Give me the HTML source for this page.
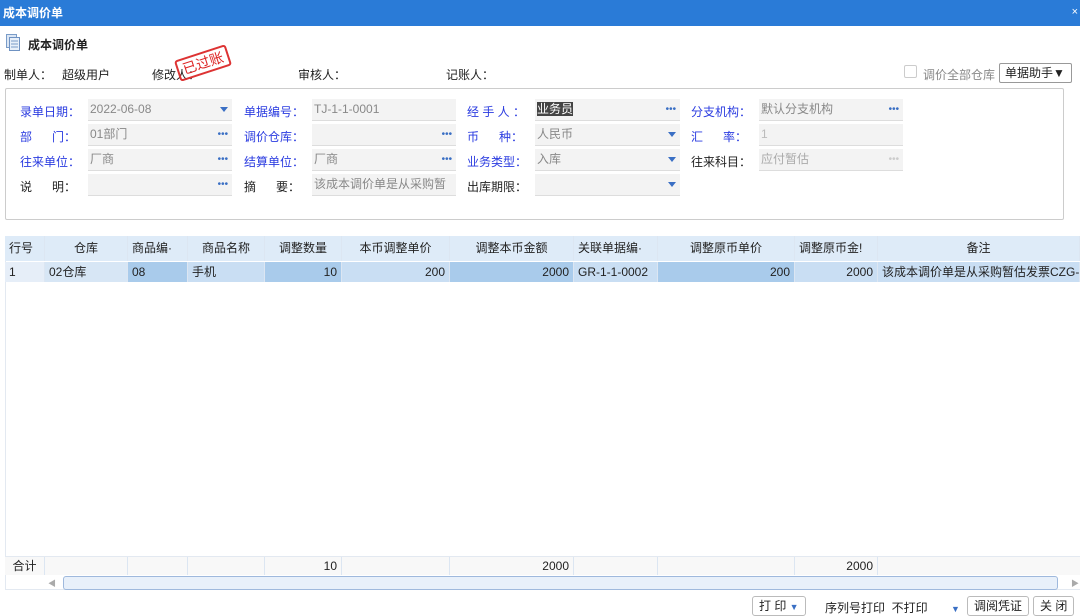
<!DOCTYPE html><html><head><meta charset="utf-8"><style>
*{margin:0;padding:0;box-sizing:border-box}
body{width:1080px;height:613px;overflow:hidden;background:#fff;font-family:"Liberation Sans","Noto Sans CJK SC",sans-serif;font-size:12px;color:#222;position:relative}
.a{position:absolute;white-space:nowrap}
.t{top:0;left:0;width:1080px;height:26px;background:#2a7bd7;color:#fff;font-weight:bold;font-size:12px;line-height:26px;padding-left:3px}
.lb{color:#2a3be0}
.in{position:absolute;height:22px;background:#f3f3f3;border-bottom:1px solid #ddd;color:#888;line-height:21px;padding-left:2px}
.d{position:absolute;right:4px;top:0;color:#3a6fc4;font-size:10px}
.ar{position:absolute;right:4px;top:8px;width:0;height:0;border-left:4px solid transparent;border-right:4px solid transparent;border-top:5px solid #3a6fc4}
.c{position:absolute;height:100%;border-right:1px solid #dce6f2;line-height:inherit;padding:0 4px;overflow:hidden;white-space:nowrap}
.r{text-align:right}
.btn{position:absolute;top:596px;height:20px;border:1px solid #bbb;border-radius:3px;background:#fff;line-height:18px;padding:0 6px}
</style></head><body>
<div class="a t">成本调价单</div>
<div class="a" style="right:2px;top:6px;color:#fff;font-size:11px">×</div>
<svg class="a" style="left:6px;top:34px" width="14" height="18"><rect x="0.5" y="0.5" width="10" height="13" fill="#dbe6f4" stroke="#7a9cc8"/><rect x="3.5" y="3.5" width="10" height="13" fill="#e8f0fa" stroke="#6f92c2"/><path d="M5 7h7M5 10h7M5 13h7" stroke="#7a9cc8"/></svg>
<div class="a" style="left:28px;top:36px;font-weight:bold">成本调价单</div>
<div class="a" style="left:4px;top:66px">制单人：</div>
<div class="a" style="left:62px;top:66px">超级用户</div>
<div class="a" style="left:152px;top:66px">修改人：</div>
<div class="a" style="left:176px;top:52px;border:2px solid #d33;color:#d22;transform:rotate(-18deg);padding:0 4px;font-size:14px;border-radius:3px;line-height:18px">已过账</div>
<div class="a" style="left:298px;top:66px">审核人：</div>
<div class="a" style="left:446px;top:66px">记账人：</div>
<div class="a" style="left:904px;top:65px;width:13px;height:13px;border:1px solid #ccc;border-radius:2px"></div>
<div class="a" style="left:923px;top:66px;color:#888">调价全部仓库</div>
<div class="a" style="left:999px;top:63px;width:73px;height:20px;border:1px solid #999;border-radius:2px;line-height:18px;padding-left:5px">单据助手▼</div>
<div class="a" style="left:5px;top:88px;width:1059px;height:132px;border:1px solid #ccc;border-radius:2px"></div>
<!-- row1 -->
<div class="a lb" style="left:20px;top:103px">录单日期：</div><div class="in" style="left:88px;top:99px;width:144px">2022-06-08<i class="ar"></i></div>
<div class="a lb" style="left:244px;top:103px">单据编号：</div><div class="in" style="left:312px;top:99px;width:144px">TJ-1-1-0001</div>
<div class="a lb" style="left:467px;top:103px">经 手 人 ：</div><div class="in" style="left:535px;top:99px;width:145px"><span style="background:#444;color:#fff">业务员</span><i class="d">•••</i></div>
<div class="a lb" style="left:691px;top:103px">分支机构：</div><div class="in" style="left:759px;top:99px;width:144px">默认分支机构<i class="d">•••</i></div>
<!-- row2 -->
<div class="a lb" style="left:20px;top:128px">部&nbsp;&nbsp;&nbsp;&nbsp;&nbsp;&nbsp;门：</div><div class="in" style="left:88px;top:124px;width:144px">01部门<i class="d">•••</i></div>
<div class="a lb" style="left:244px;top:128px">调价仓库：</div><div class="in" style="left:312px;top:124px;width:144px"><i class="d">•••</i></div>
<div class="a lb" style="left:467px;top:128px">币&nbsp;&nbsp;&nbsp;&nbsp;&nbsp;&nbsp;种：</div><div class="in" style="left:535px;top:124px;width:145px">人民币<i class="ar"></i></div>
<div class="a lb" style="left:691px;top:128px">汇&nbsp;&nbsp;&nbsp;&nbsp;&nbsp;&nbsp;率：</div><div class="in" style="left:759px;top:124px;width:144px;color:#bbb">1</div>
<!-- row3 -->
<div class="a lb" style="left:20px;top:153px">往来单位：</div><div class="in" style="left:88px;top:149px;width:144px">厂商<i class="d">•••</i></div>
<div class="a lb" style="left:244px;top:153px">结算单位：</div><div class="in" style="left:312px;top:149px;width:144px">厂商<i class="d">•••</i></div>
<div class="a lb" style="left:467px;top:153px">业务类型：</div><div class="in" style="left:535px;top:149px;width:145px">入库<i class="ar"></i></div>
<div class="a" style="left:691px;top:153px">往来科目：</div><div class="in" style="left:759px;top:149px;width:144px;color:#aaa">应付暂估<i class="d" style="color:#ccc">•••</i></div>
<!-- row4 -->
<div class="a" style="left:20px;top:178px">说&nbsp;&nbsp;&nbsp;&nbsp;&nbsp;&nbsp;明：</div><div class="in" style="left:88px;top:174px;width:144px"><i class="d">•••</i></div>
<div class="a" style="left:244px;top:178px">摘&nbsp;&nbsp;&nbsp;&nbsp;&nbsp;&nbsp;要：</div><div class="in" style="left:312px;top:174px;width:144px;overflow:hidden">该成本调价单是从采购暂</div>
<div class="a" style="left:467px;top:178px">出库期限：</div><div class="in" style="left:535px;top:174px;width:145px"><i class="ar"></i></div>
<!-- grid -->
<div class="a" style="left:5px;top:236px;width:1075px;height:354px;border:1px solid #e3e9f1;border-right:none"></div>
<div class="a" style="left:5px;top:236px;width:1075px;height:25px;background:#deebf8;line-height:25px">
<div class="c" style="left:0;width:40px">行号</div><div class="c" style="left:40px;width:83px;text-align:center">仓库</div><div class="c" style="left:123px;width:60px">商品编·</div><div class="c" style="left:183px;width:77px;text-align:center">商品名称</div><div class="c" style="left:260px;width:77px;text-align:center">调整数量</div><div class="c" style="left:337px;width:108px;text-align:center">本币调整单价</div><div class="c" style="left:445px;width:124px;text-align:center">调整本币金额</div><div class="c" style="left:569px;width:84px">关联单据编·</div><div class="c" style="left:653px;width:137px;text-align:center">调整原币单价</div><div class="c" style="left:790px;width:83px">调整原币金!</div><div class="c" style="left:873px;width:202px;text-align:center">备注</div></div>
<div class="a" style="left:5px;top:262px;width:1075px;height:20px;background:#c9def3;line-height:20px">
<div class="c" style="left:0;width:40px;background:#e6eef8">1</div><div class="c" style="left:40px;width:83px;background:#d7e6f5">02仓库</div><div class="c" style="left:123px;width:60px;background:#a9cbeb">08</div><div class="c" style="left:183px;width:77px">手机</div><div class="c r" style="left:260px;width:77px;background:#a9cbeb">10</div><div class="c r" style="left:337px;width:108px">200</div><div class="c r" style="left:445px;width:124px;background:#a9cbeb">2000</div><div class="c" style="left:569px;width:84px">GR-1-1-0002</div><div class="c r" style="left:653px;width:137px;background:#a9cbeb">200</div><div class="c r" style="left:790px;width:83px">2000</div><div class="c" style="left:873px;width:202px">该成本调价单是从采购暂估发票CZG-1</div></div>
<div class="a" style="left:5px;top:556px;width:1075px;height:19px;background:#f8f8f8;border-top:1px solid #e3e9f1;line-height:18px">
<div class="c" style="left:0;width:40px;text-align:center">合计</div><div class="c" style="left:40px;width:83px"></div><div class="c" style="left:123px;width:60px"></div><div class="c" style="left:183px;width:77px"></div><div class="c r" style="left:260px;width:77px">10</div><div class="c" style="left:337px;width:108px"></div><div class="c r" style="left:445px;width:124px">2000</div><div class="c" style="left:569px;width:84px"></div><div class="c" style="left:653px;width:137px"></div><div class="c r" style="left:790px;width:83px">2000</div></div>
<div class="a" style="left:63px;top:576px;width:995px;height:14px;background:#e8f0fa;border:1px solid #9fb9dd;border-radius:3px"></div>
<div class="a" style="left:48px;top:578px;color:#aaa;font-size:8px">◀</div><div class="a" style="left:1071px;top:578px;color:#aaa;font-size:8px">▶</div>
<div class="btn" style="left:752px">打 印 <span style="color:#3a6fc4;font-size:9px">▼</span></div>
<div class="a" style="left:825px;top:599px">序列号打印&nbsp;&nbsp;不打印&nbsp;&nbsp;&nbsp;&nbsp;&nbsp;&nbsp;&nbsp;<span style="color:#3a6fc4;font-size:9px">▼</span></div>
<div class="btn" style="left:967px">调阅凭证</div>
<div class="btn" style="left:1033px">关 闭</div>
</body></html>
